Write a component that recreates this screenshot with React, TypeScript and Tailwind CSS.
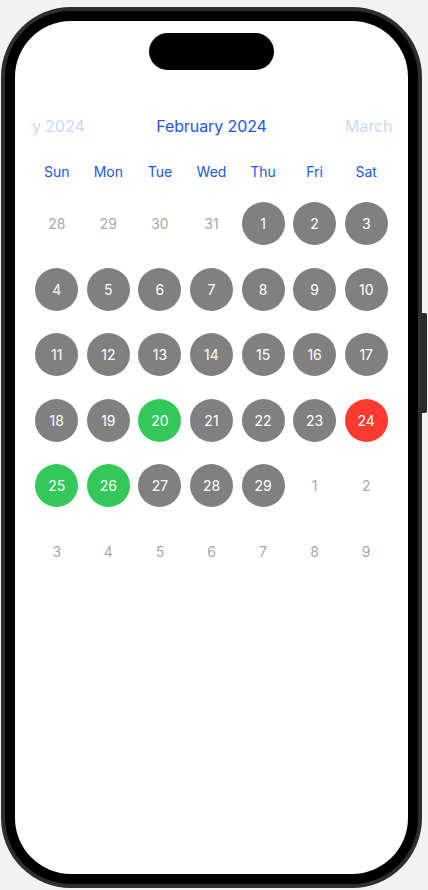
import React from 'react';

type Day = { n: number; kind: 'out' | 'gray' | 'green' | 'red' };

const weekdays = ['Sun', 'Mon', 'Tue', 'Wed', 'Thu', 'Fri', 'Sat'];

const green = [20, 25, 26];
const red = [24];

function buildDays(): Day[] {
  const days: Day[] = [];
  [28, 29, 30, 31].forEach((n) => days.push({ n, kind: 'out' }));
  for (let n = 1; n <= 29; n++) {
    days.push({ n, kind: green.includes(n) ? 'green' : red.includes(n) ? 'red' : 'gray' });
  }
  for (let n = 1; n <= 9; n++) days.push({ n, kind: 'out' });
  return days;
}

const circleClass: Record<Day['kind'], string> = {
  out: 'text-[#a9a9a9]',
  gray: 'bg-[#808080] text-white',
  green: 'bg-[#34c759] text-white',
  red: 'bg-[#ff3b30] text-white',
};

function DayCell({ day }: { day: Day }) {
  return (
    <div className="flex h-[65.5px] items-center justify-center">
      <div className={`flex h-[43px] w-[43px] items-center justify-center rounded-full text-[14px] ${circleClass[day.kind]}`}>
        {day.n}
      </div>
    </div>
  );
}

export default function App() {
  const days = buildDays();

  return (
    <div className="h-[890px] w-[428px] overflow-hidden bg-[#f2f2f2] font-['Inter',sans-serif]">
      <div className="relative ml-[1px] mt-[7px] w-[421px] rounded-[70px] bg-[#2e2e2e] p-[4px]">
        {/* side button */}
        <div className="absolute right-[-5px] top-[306px] h-[100px] w-[5px] rounded-r-[2px] bg-[#2a2a2a]" />
        <div className="rounded-[66px] bg-black p-[10px]">
          <div className="flex h-[853px] w-[393px] flex-col overflow-hidden rounded-[56px] bg-white">
            {/* dynamic island */}
            <div className="mx-auto mt-[12px] h-[37px] w-[125px] shrink-0 rounded-full bg-black" />

            <div className="px-4">
              {/* month carousel */}
              <div className="mt-[41px] h-[30px] overflow-hidden">
                <div className="-ml-[88px] flex h-full">
                  <div className="flex w-[179px] shrink-0 items-center justify-center whitespace-nowrap text-[16px] tracking-[-0.1px] text-[#ccd8f8]">
                    January 2024
                  </div>
                  <div className="flex w-[179px] shrink-0 items-center justify-center whitespace-nowrap text-[16px] tracking-[-0.1px] text-[#2356e0]">
                    February 2024
                  </div>
                  <div className="flex w-[179px] shrink-0 items-center justify-center whitespace-nowrap text-[16px] tracking-[-0.1px] text-[#ccd8f8]">
                    March 2024
                  </div>
                </div>
              </div>

              {/* weekdays */}
              <div className="mt-[20px] grid h-[20px] grid-cols-7">
                {weekdays.map((w) => (
                  <div key={w} className="flex items-center justify-center text-[14px] text-[#2356e0]">
                    {w}
                  </div>
                ))}
              </div>

              {/* days */}
              <div className="mt-[10px] grid grid-cols-7">
                {days.map((d, i) => (
                  <DayCell key={i} day={d} />
                ))}
              </div>
            </div>
          </div>
        </div>
      </div>
    </div>
  );
}
